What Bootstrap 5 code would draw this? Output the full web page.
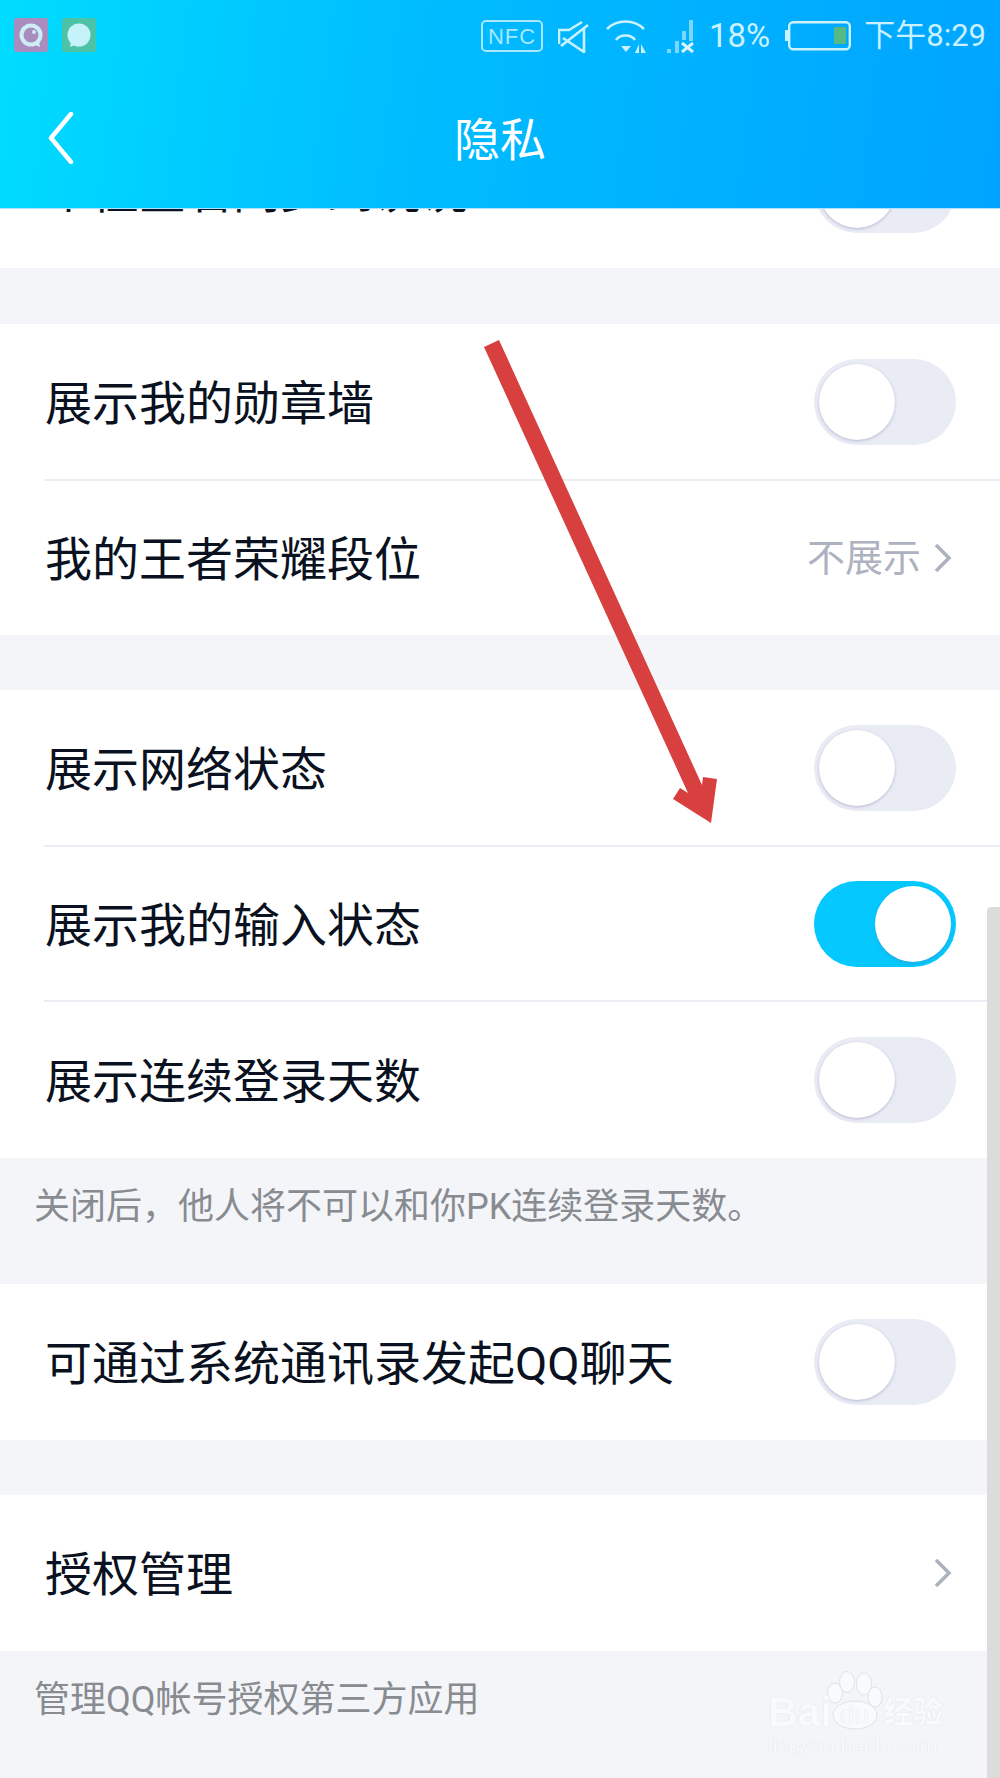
<!DOCTYPE html>
<html lang="zh">
<head>
  <meta charset="UTF-8" />
  <title>隐私</title>
  <link href="https://cdn.jsdelivr.net/npm/bootstrap@5.3.3/dist/css/bootstrap.min.css" rel="stylesheet" />
  <style>
    html, body { height: 1778px; overflow: hidden; }
    body {
      position: relative;
      background: #f4f5f9;
      font-family: "Roboto", "Noto Sans CJK SC", sans-serif;
      color: #0a1120;
    }
    .top-head {
      position: relative;
      z-index: 2;
      height: 209px;
      background: linear-gradient(97deg, #00dcff 0%, #00bdff 40%, #00a4ff 100%);
      border-bottom: 1px solid #a8e4ff;
    }
    .status-row { height: 100px; padding: 16px 14px 0 14px; color: #c9f1ff; }
    .app-ico { width: 34px; height: 34px; margin-top: 2px; border-radius: 3px; margin-right: 14px; }
    .app-ico.purple { background: #a98dbe; }
    .app-ico.green { background: #4cc3a6; }
    .status-line { height: 40px; }
    .status-pct { font-size: 33px; line-height: 40px; margin-right: 15px; }
    .status-time { font-size: 31px; line-height: 40px; }
    .gap-a { margin-right: 15px; }
    .gap-b { margin-right: 17px; }
    .gap-c { margin-right: 21px; }
    .gap-d { margin-right: 13px; }
    .title-row { height: 108px; margin-top: -14px; }
    .back-btn { position: absolute; left: 47px; top: 112px; }
    .title-txt { color: #fff; font-size: 46px; line-height: 60px; }
    .settings-wrap { margin-top: -97px; position: relative; z-index: 1; }
    .grp { background: #fff; margin-bottom: 56px; }
    .grp.with-note { margin-bottom: 0; }
    .grp.tight { margin-bottom: 55px; }
    .set-row {
      height: 155px;
      margin-left: 44px;
      padding-right: 44px;
      font-size: 47px;
    }
    .set-row:last-child { height: 156px; }
    .grp.with-note.tall .set-row:last-child { height: 158px; }
    .set-row + .set-row { border-top: 2px solid #ebedf4; }
    .row-lbl { padding: 5px 0 0 1px; }
    .chev-ico { margin-right: 3px; }
    .note-txt { font-size: 36px; color: #888b90; padding-left: 34px; line-height: 48px; padding-top: 25px; }
    .note-a { height: 126px; }
    .tgl {
      width: 142px;
      height: 86px;
      border-radius: 43px;
      background: #e9ebf5;
      position: relative;
      flex: none;
    }
    .tgl::after {
      content: "";
      position: absolute;
      left: 5px;
      top: 5px;
      width: 76px;
      height: 76px;
      border-radius: 50%;
      background: #fff;
      box-shadow: 0 1px 3px rgba(120, 125, 160, .45);
    }
    .tgl.on { background: #05c8ff; }
    .tgl.on::after { left: 61px; box-shadow: 0 2px 3px rgba(60, 150, 200, .5); }
    .val-txt { font-size: 38px; color: #aeb2c0; gap: 12px; }
    .scroll-thumb {
      position: absolute;
      right: 0;
      top: 907px;
      bottom: 0;
      width: 13px;
      background: #dcdcdc;
      border-radius: 4px 0 0 0;
      z-index: 3;
    }
    .arrow-over { position: absolute; left: 0; top: 0; z-index: 4; pointer-events: none; }
    .wm {
      position: absolute;
      left: 766px;
      top: 1668px;
      width: 190px;
      height: 110px;
      z-index: 4;
      color: #f9fafc;
      font-family: "Liberation Sans", "Noto Sans CJK SC", sans-serif;
      text-shadow: 0 0 1px #d6d8de;
    }
    .wm svg { position: absolute; left: 0; top: 0; }
    .wm-bai { position: absolute; left: 2px; top: 22px; font-size: 41px; line-height: 44px; font-weight: 700; }
    .wm-du { position: absolute; left: 74px; top: 32px; font-size: 26px; line-height: 30px; }
    .wm-cn { position: absolute; left: 117px; top: 27px; font-size: 30px; line-height: 34px; white-space: nowrap; font-weight: 700; }
    .wm-url { position: absolute; left: 2px; top: 65px; font-size: 21px; line-height: 24px; white-space: nowrap; }
  </style>
</head>
<body>

  <!-- header -->
  <div class="top-head">
    <div class="status-row d-flex align-items-start">
      <div class="app-ico purple d-flex align-items-center justify-content-center">
        <svg width="28" height="28" viewBox="0 0 28 28"><path d="M16 23 L23 26 L22 20Z" fill="#cdeef5"/><circle cx="14" cy="14" r="11.5" fill="#cdeef5"/><circle cx="14" cy="14" r="7.5" fill="#a98dbe"/><circle cx="17" cy="11" r="2" fill="#cdeef5"/></svg>
      </div>
      <div class="app-ico green d-flex align-items-center justify-content-center">
        <svg width="28" height="28" viewBox="0 0 28 28"><path d="M6 21 L5 26 L10 24Z" fill="#c6f3fa"/><circle cx="14" cy="14" r="11.5" fill="#c6f3fa"/></svg>
      </div>
      <div class="ms-auto d-flex align-items-center status-line">
        <svg width="62" height="32" viewBox="0 0 62 32" class="gap-a"><rect x="1" y="1" width="60" height="30" rx="4" fill="none" stroke="#a8e7ff" stroke-width="2"/><text x="31" y="24" font-size="22" text-anchor="middle" fill="#a8e7ff" font-family="Liberation Sans" letter-spacing="1">NFC</text></svg>
        <svg width="31" height="33" viewBox="0 0 31 33" class="gap-b"><path d="M1 24 V10 H11 L24 2 M30 5 L3 26 M5 18 L26 32 V9" fill="none" stroke="#c9f1ff" stroke-width="2.6"/></svg>
        <svg width="40" height="33" viewBox="0 0 40 33" class="gap-c"><g fill="none" stroke="#c9f1ff" stroke-width="2.6"><path d="M1 9 C11 -1 28 -1 38 9"/><path d="M10 20 C14 14 25 14 29 20"/></g><path d="M15 26 H25 L20 32Z" fill="#c9f1ff"/><path d="M33 24 V33 H29Z M35 24 V33 H40Z" fill="#c9f1ff"/></svg>
        <svg width="27" height="33" viewBox="0 0 27 33" class="gap-a"><g fill="#7cd6ff"><rect x="0" y="29" width="4" height="4"/><rect x="8" y="21" width="4" height="12"/><rect x="15" y="11" width="4" height="9"/><rect x="22" y="0" width="4" height="21"/></g><path d="M15 23 L26 32 M26 23 L15 32" stroke="#d8f5ff" stroke-width="3"/></svg>
        <span class="status-pct">18%</span>
        <svg width="66" height="30" viewBox="0 0 66 30" class="gap-d"><rect x="0" y="9" width="4" height="11" fill="#c9f1ff"/><rect x="4.2" y="1.2" width="60.6" height="27" rx="4" fill="none" stroke="#c9f1ff" stroke-width="2.4"/><rect x="49" y="6" width="12" height="17" fill="#57ba85"/></svg>
        <span class="status-time">下午8:29</span>
      </div>
    </div>
    <svg class="back-btn" width="28" height="52" viewBox="0 0 28 52"><path d="M24 2 L4 26 L24 50" fill="none" stroke="#fff" stroke-width="4.5" stroke-linecap="round" stroke-linejoin="round"/></svg>
    <div class="title-row d-flex align-items-center justify-content-center">
      <span class="title-txt">隐私</span>
    </div>
  </div>

  <!-- settings -->
  <div class="settings-wrap">
    <div class="grp">
      <div class="set-row d-flex align-items-center justify-content-between"><span class="row-lbl">个性签名同步到说说</span><span class="tgl"></span></div>
    </div>

    <div class="grp tight">
      <div class="set-row d-flex align-items-center justify-content-between"><span class="row-lbl">展示我的勋章墙</span><span class="tgl"></span></div>
      <div class="set-row d-flex align-items-center justify-content-between">
        <span class="row-lbl">我的王者荣耀段位</span>
        <span class="val-txt d-flex align-items-center">不展示
          <svg class="chev-ico" width="20" height="32" viewBox="0 0 20 32"><path d="M3 3 L16 16 L3 29" fill="none" stroke="#aeb2c0" stroke-width="3.6"/></svg>
        </span>
      </div>
    </div>

    <div class="grp with-note tall">
      <div class="set-row d-flex align-items-center justify-content-between"><span class="row-lbl">展示网络状态</span><span class="tgl"></span></div>
      <div class="set-row d-flex align-items-center justify-content-between"><span class="row-lbl">展示我的输入状态</span><span class="tgl on"></span></div>
      <div class="set-row d-flex align-items-center justify-content-between"><span class="row-lbl">展示连续登录天数</span><span class="tgl"></span></div>
    </div>
    <div class="note-txt note-a">关闭后，他人将不可以和你PK连续登录天数。</div>

    <div class="grp tight">
      <div class="set-row d-flex align-items-center justify-content-between"><span class="row-lbl">可通过系统通讯录发起QQ聊天</span><span class="tgl"></span></div>
    </div>

    <div class="grp with-note">
      <div class="set-row d-flex align-items-center justify-content-between">
        <span class="row-lbl">授权管理</span>
        <svg class="chev-ico" width="20" height="32" viewBox="0 0 20 32"><path d="M3 3 L16 16 L3 29" fill="none" stroke="#aeb2c0" stroke-width="3.6"/></svg>
      </div>
    </div>
    <div class="note-txt">管理QQ帐号授权第三方应用</div>
  </div>

  <div class="scroll-thumb"></div>

  <!-- red arrow drawn over the screenshot -->
  <svg class="arrow-over" width="1000" height="1778" viewBox="0 0 1000 1778">
    <path d="M484 347 L499 340 L702 785 L703 777 L717 779 L711 823 L673 799 L680 788 L688 793 Z" fill="#d84040"/>
  </svg>

  <!-- watermark -->
  <div class="wm">
    <svg width="190" height="110" viewBox="0 0 190 110">
      <g fill="#f9fafc" stroke="#e0e2e8" stroke-width="1">
        <ellipse cx="69" cy="25" rx="7.5" ry="10"/>
        <ellipse cx="81" cy="14" rx="7.5" ry="10.5"/>
        <ellipse cx="98" cy="16" rx="7.5" ry="11"/>
        <ellipse cx="109" cy="29" rx="7" ry="10"/>
        <ellipse cx="89" cy="47" rx="22" ry="14"/>
      </g>
    </svg>
    <span class="wm-bai">Bai</span>
    <span class="wm-du">du</span>
    <span class="wm-cn">经验</span>
    <span class="wm-url">jingyan.baidu.com</span>
  </div>

</body>
</html>
